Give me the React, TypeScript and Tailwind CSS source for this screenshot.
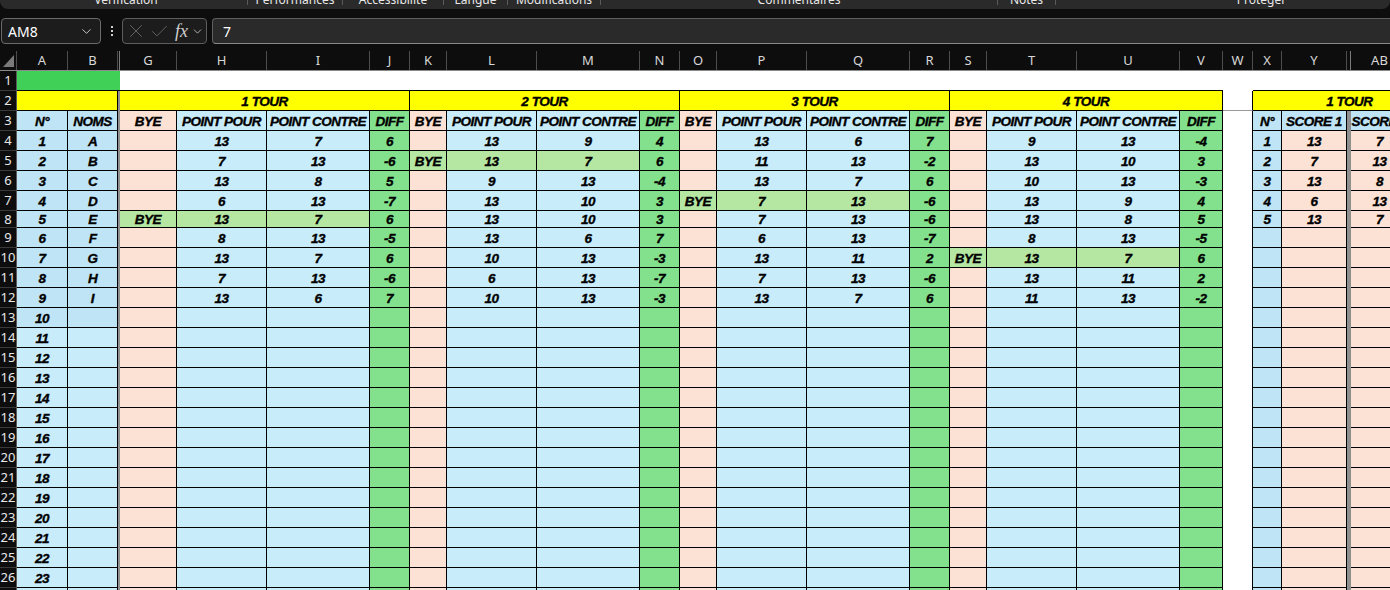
import { Fragment, type ReactNode } from 'react'
import { Check, ChevronDown, X } from 'lucide-react'

// one template for every row so columns line up like the sheet
const GRID =
  'grid grid-cols-[17px_51px_50px_2px_57px_90px_103px_40px_37px_90px_103px_40px_37px_90px_103px_40px_37px_90px_103px_43px_30px_29px_65px_4px_58px_40px]'

const BLUE = 'bg-[#c9ecfa]'
const BLUE_DARK = 'bg-[#bfe4f5]'
const PEACH = 'bg-[#fce2d5]'
const DIFF = 'bg-[#83e18d]'
const BYE_ROW = 'bg-[#b5e6a2]'
const YELLOW = 'bg-[#ffff00]'

const LETTERS = ['A', 'B', 'C', 'D', 'E', 'F', 'G', 'H', 'I']

type Tour = { bye: number; rows: number[][] }

const TOURS: Tour[] = [
  { bye: 4, rows: [[13, 7, 6], [7, 13, -6], [13, 8, 5], [6, 13, -7], [13, 7, 6], [8, 13, -5], [13, 7, 6], [7, 13, -6], [13, 6, 7]] },
  { bye: 1, rows: [[13, 9, 4], [13, 7, 6], [9, 13, -4], [13, 10, 3], [13, 10, 3], [13, 6, 7], [10, 13, -3], [6, 13, -7], [10, 13, -3]] },
  { bye: 3, rows: [[13, 6, 7], [11, 13, -2], [13, 7, 6], [7, 13, -6], [7, 13, -6], [6, 13, -7], [13, 11, 2], [7, 13, -6], [13, 7, 6]] },
  { bye: 6, rows: [[9, 13, -4], [13, 10, 3], [10, 13, -3], [13, 9, 4], [13, 8, 5], [8, 13, -5], [13, 7, 6], [13, 11, 2], [11, 13, -2]] },
]

const SCORES = [[13, 7], [7, 13], [13, 8], [6, 13], [13, 7]]

const RIBBON = [
  { label: 'Vérification', w: 'w-[242px]' },
  { label: 'Performances', w: 'w-[94px]' },
  { label: 'Accessibilité', w: 'w-[100px]' },
  { label: 'Langue', w: 'w-[63px]' },
  { label: 'Modifications', w: 'w-[92px]' },
  { label: 'Commentaires', w: 'w-[396px]' },
  { label: 'Notes', w: 'w-[57px]' },
  { label: 'Protéger', w: 'w-[411px]' },
]

const HEADERS = ['A', 'B', '', 'G', 'H', 'I', 'J', 'K', 'L', 'M', 'N', 'O', 'P', 'Q', 'R', 'S', 'T', 'U', 'V', 'W', 'X', 'Y', '', 'AB', 'AC']

const CELL_FONT =
  "font-['Liberation_Sans',Arial,sans-serif] text-[13.5px] font-bold italic tracking-[-0.5px] text-black [-webkit-text-stroke:0.35px_black]"

function Cell({ className = '', children }: { className?: string; children?: ReactNode }) {
  return (
    <div className={`flex items-center justify-center overflow-hidden whitespace-nowrap border-r border-b border-black pt-[2px] leading-none ${className}`}>
      {children}
    </div>
  )
}

function Divider() {
  return <div className="bg-[#8f8f8f]" />
}

function RowHead({ n }: { n: number }) {
  return (
    <div className="flex items-center justify-center overflow-visible border-r border-b border-r-[#5a5a5a] border-b-[#3a3a3a] bg-[#0d0d0d] font-['Noto_Sans',sans-serif] text-[13px] font-normal not-italic leading-none tracking-normal text-[#e8e8e8] [-webkit-text-stroke:0px]">
      {n}
    </div>
  )
}

function Ribbon() {
  return (
    <div className="flex h-[9px] overflow-hidden rounded-b-[8px] bg-[#2a2a2a] pl-[5px] font-['Noto_Sans',sans-serif] text-[12px] leading-[16px] text-[#e8e8e8]">
      {RIBBON.map((g, i) => (
        <Fragment key={g.label}>
          {i > 0 && <div className="h-[5px] w-px shrink-0 bg-[#5a5a5a]" />}
          <div className={`${g.w} -mt-[8px] shrink-0 text-center whitespace-nowrap`}>{g.label}</div>
        </Fragment>
      ))}
    </div>
  )
}

function FormulaBar() {
  return (
    <div className="mt-[9px] flex h-[26px] pl-px font-['Noto_Sans',sans-serif] text-[14px] text-white">
      <div className="flex w-[100px] items-center justify-between rounded-[4px] border border-[#6b6b6b] bg-[#1c1c1c] px-[6px]">
        <span>AM8</span>
        <ChevronDown size={15} strokeWidth={1.5} className="text-[#d0d0d0]" />
      </div>
      <div className="flex w-[21px] flex-col items-center justify-center gap-[2px]">
        <span className="h-[2px] w-[2px] bg-[#d0d0d0]" />
        <span className="h-[2px] w-[2px] bg-[#d0d0d0]" />
        <span className="h-[2px] w-[2px] bg-[#d0d0d0]" />
      </div>
      <div className="flex w-[85px] items-center rounded-[4px] border border-[#5e5e5e] bg-[#1c1c1c] pl-[2px]">
        <X size={22} strokeWidth={0.9} className="text-[#707070]" />
        <Check size={21} strokeWidth={0.9} className="ml-[2px] text-[#707070]" />
        <span className="ml-[5px] font-['Liberation_Serif',serif] text-[18px] leading-none italic text-[#cfcfcf]">fx</span>
        <ChevronDown size={13} strokeWidth={1.5} className="ml-[3px] text-[#cfcfcf]" />
      </div>
      <div className="ml-[5px] flex flex-1 items-center rounded-l-[4px] border border-r-0 border-[#5e5e5e] border-b-[#8a8a8a] bg-[#2a2a2a] pl-[10px]">
        7
      </div>
    </div>
  )
}

function ColumnHeaders() {
  return (
    <div className={`${GRID} h-[27px] border-b border-[#8a8a8a] pt-[7px] font-['Noto_Sans',sans-serif] text-[13px] leading-none text-[#d8d8d8]`}>
      <div className="flex items-end border-r border-[#4d4d4d] pb-[3px] pl-[3px]">
        <svg width="11" height="12" viewBox="0 0 11 12">
          <polygon points="11,0 11,12 0,12" fill="#7a7a7a" />
        </svg>
      </div>
      {HEADERS.map((h, i) => (
        <div
          key={i}
          className={`flex items-center justify-center border-r ${h === '' ? 'border-[#7a7a7a]' : 'border-[#4d4d4d]'}`}
        >
          {h}
        </div>
      ))}
    </div>
  )
}

function TitleRows() {
  return (
    <>
      <div className={`${GRID} h-[20px]`}>
        <RowHead n={1} />
        <div className="col-span-3 border-b border-black bg-[#40d058]" />
        <div className="col-span-16 border-b border-black bg-white" />
        <div className="bg-white" />
        <div className="col-span-5 border-b border-black bg-white" />
      </div>
      <div className={`${GRID} h-[20px]`}>
        <RowHead n={2} />
        <Cell className={`col-span-2 ${YELLOW}`} />
        <Divider />
        {[1, 2, 3, 4].map((n) => (
          <Cell key={n} className={`col-span-4 ${YELLOW}`}>
            {n} TOUR
          </Cell>
        ))}
        <div className="border-r border-b border-r-black border-b-[#9a9a9a] bg-white" />
        <Cell className={`col-span-5 ${YELLOW}`}>
          <span className="pr-[2px]">1 TOUR</span>
        </Cell>
      </div>
      <div className={`${GRID} h-[20px]`}>
        <RowHead n={3} />
        <Cell className={BLUE_DARK}>N°</Cell>
        <Cell className={BLUE_DARK}>NOMS</Cell>
        <Divider />
        {TOURS.map((_, k) => (
          <Fragment key={k}>
            <Cell className={PEACH}>BYE</Cell>
            <Cell className={BLUE}>POINT POUR</Cell>
            <Cell className={BLUE}>POINT CONTRE</Cell>
            <Cell className={DIFF}>DIFF</Cell>
          </Fragment>
        ))}
        <div className="border-r border-black bg-white" />
        <Cell className={BLUE_DARK}>N°</Cell>
        <Cell className={BLUE_DARK}>SCORE 1</Cell>
        <Divider />
        <Cell className={BLUE_DARK}>SCORE 2</Cell>
        <Cell className={BLUE_DARK} />
      </div>
    </>
  )
}

function DataRow({ r }: { r: number }) {
  const i = r - 4
  const filled = i < 9
  const idBg = r <= 13 ? BLUE_DARK : BLUE
  const score = i < SCORES.length ? SCORES[i] : null

  return (
    <div className={`${GRID} ${r === 8 ? 'h-[17px]' : 'h-[20px]'}`}>
      <RowHead n={r} />
      <Cell className={idBg}>{r - 3}</Cell>
      <Cell className={idBg}>{filled ? LETTERS[i] : ''}</Cell>
      <Divider />
      {TOURS.map((t, k) => {
        const row = filled ? t.rows[i] : null
        const bye = filled && t.bye === i
        return (
          <Fragment key={k}>
            <Cell className={bye ? BYE_ROW : PEACH}>{bye ? 'BYE' : ''}</Cell>
            <Cell className={bye ? BYE_ROW : BLUE}>{row?.[0]}</Cell>
            <Cell className={bye ? BYE_ROW : BLUE}>{row?.[1]}</Cell>
            <Cell className={DIFF}>{row?.[2]}</Cell>
          </Fragment>
        )
      })}
      <div className="border-r border-black bg-white" />
      <Cell className={BLUE_DARK}>{score ? i + 1 : ''}</Cell>
      <Cell className={PEACH}>{score?.[0]}</Cell>
      <Divider />
      <Cell className={PEACH}>{score?.[1]}</Cell>
      <Cell className={PEACH} />
    </div>
  )
}

export default function App() {
  const rows = Array.from({ length: 24 }, (_, k) => k + 4)

  return (
    <div className="h-[590px] w-[1390px] overflow-hidden bg-[#0d0d0d]">
      <Ribbon />
      <FormulaBar />
      <ColumnHeaders />
      <div className={CELL_FONT}>
        <TitleRows />
        {rows.map((r) => (
          <DataRow key={r} r={r} />
        ))}
      </div>
    </div>
  )
}
